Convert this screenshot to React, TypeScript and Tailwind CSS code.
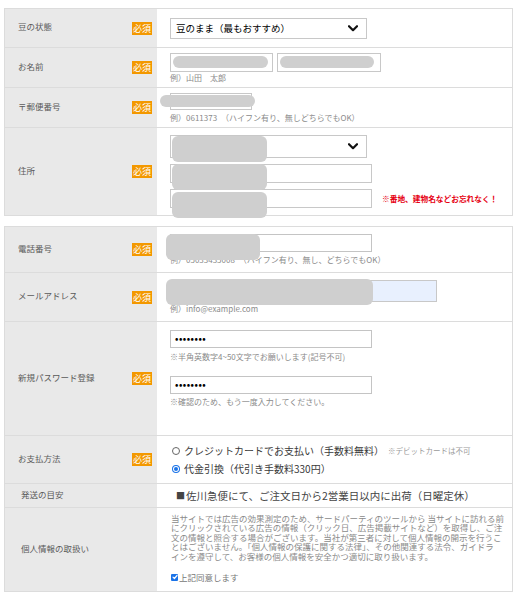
import React from "react";

const Badge = () => (
  <span className="flex h-[13px] w-[20px] items-center justify-center bg-[#f39800] text-[9px] leading-none text-white">
    必須
  </span>
);

const Chevron = () => (
  <svg width="10" height="7" viewBox="0 0 10 7" fill="none">
    <path d="M1 1.2L5 5.2L9 1.2" stroke="#111" strokeWidth="2.2" strokeLinecap="round" strokeLinejoin="round" />
  </svg>
);

// gray blurred blocks that cover personal data in the screenshot
const Mask = ({ className }: { className: string }) => (
  <div className={`absolute z-10 rounded-[6px] bg-[#cfcfcf] ${className}`} />
);

function Label({ text, required = true, pl = "pl-[13px]" }: { text: string; required?: boolean; pl?: string }) {
  return (
    <div className={`flex items-center justify-between bg-[#e9e9e9] pr-[5px] ${pl}`}>
      <span className="pb-[4px] text-[8.5px] leading-[12px] text-[#5a5a5a]">{text}</span>
      {required && <Badge />}
    </div>
  );
}

const Hint = ({ children, className = "" }: { children: React.ReactNode; className?: string }) => (
  <div className={`whitespace-nowrap text-[8px] leading-[10px] text-[#8a8a8a] ${className}`}>{children}</div>
);

const Dots = () => (
  <div className="flex h-[18px] w-[202px] items-center border border-[#c4c4c4] pl-[4px] text-[9px] font-bold tracking-[0.5px] text-black">
    ••••••••
  </div>
);

export default function App() {
  return (
    <div className="h-[596px] w-[519px] overflow-hidden bg-white pl-[4px] pt-[8px] font-['Noto_Sans_CJK_JP','Noto_Sans',sans-serif]">
      {/* 上のブロック */}
      <div className="w-[509px] border border-[#dcdcdc]">
        <div className="grid h-[38px] grid-cols-[152px_1fr]">
          <Label text="豆の状態" />
          <div className="flex items-center pl-[13px]">
            <div className="flex h-[21px] w-[197px] items-center justify-between border border-[#c8c8c8] pl-[5px] pr-[8px] text-[9.5px] text-black">
              <span>豆のまま（最もおすすめ）</span>
              <Chevron />
            </div>
          </div>
        </div>

        <div className="grid h-[40px] grid-cols-[152px_1fr] border-t border-[#dcdcdc]">
          <Label text="お名前" />
          <div className="flex flex-col justify-center pl-[13px]">
            <div className="flex gap-[4px]">
              <div className="relative h-[19px] w-[103px] border border-[#c8c8c8]">
                <Mask className="left-[2px] top-[2px] h-[12px] w-[95px]" />
              </div>
              <div className="relative h-[19px] w-[104px] border border-[#c8c8c8]">
                <Mask className="left-[2px] top-[2px] h-[12px] w-[94px]" />
              </div>
            </div>
            <Hint className="mt-[1px]">例）山田　太郎</Hint>
          </div>
        </div>

        <div className="grid h-[40px] grid-cols-[152px_1fr] border-t border-[#dcdcdc]">
          <Label text="〒郵便番号" />
          <div className="relative flex flex-col justify-center pl-[13px]">
            <div className="h-[17px] w-[82px] border border-[#c8c8c8]" />
            <Hint className="mt-[3px]">例）0611373　（ハイフン有り、無しどちらでもOK）</Hint>
            <Mask className="left-[3px] top-[7px] h-[12px] w-[95px]" />
          </div>
        </div>

        <div className="grid h-[88px] grid-cols-[152px_1fr] border-t border-[#dcdcdc]">
          <Label text="住所" />
          <div className="relative flex flex-col justify-center gap-[6px] pl-[13px]">
            <div className="flex h-[23px] w-[197px] items-center justify-end border border-[#c8c8c8] pr-[8px]">
              <Chevron />
            </div>
            <div className="h-[19px] w-[202px] border border-[#c8c8c8]" />
            <div className="flex items-center">
              <div className="h-[19px] w-[202px] border border-[#c8c8c8]" />
              <span className="ml-[10px] whitespace-nowrap text-[7.7px] font-bold text-[#e60012]">※番地、建物名などお忘れなく！</span>
            </div>
            <Mask className="left-[15px] top-[8px] h-[26px] w-[95px]" />
            <Mask className="left-[15px] top-[36px] h-[26px] w-[95px]" />
            <Mask className="left-[15px] top-[64px] h-[26px] w-[95px]" />
          </div>
        </div>
      </div>

      {/* 下のブロック */}
      <div className="mt-[10px] w-[509px] border border-[#dcdcdc]">
        <div className="grid h-[45px] grid-cols-[152px_1fr]">
          <Label text="電話番号" />
          <div className="relative flex flex-col justify-center pl-[13px]">
            <div className="h-[18px] w-[202px] border border-[#c4c4c4]" />
            <Hint className="mt-[3px]">例）05033435008　（ハイフン有り、無し、どちらでもOK）</Hint>
            <Mask className="left-[9px] top-[7px] h-[26px] w-[94px]" />
          </div>
        </div>

        <div className="grid h-[49px] grid-cols-[152px_1fr] border-t border-[#dcdcdc]">
          <Label text="メールアドレス" />
          <div className="relative flex flex-col justify-center pl-[13px]">
            <div className="h-[22px] w-[267px] border border-[#c8c8c8] bg-[#e8f0fe]" />
            <Hint className="mt-[2px] text-[8.5px]">例）info@example.com</Hint>
            <Mask className="left-[9px] top-[6px] h-[26px] w-[207px]" />
          </div>
        </div>

        <div className="grid h-[114px] grid-cols-[152px_1fr] border-t border-[#dcdcdc]">
          <Label text="新規パスワード登録" />
          <div className="flex flex-col pl-[13px] pt-[8px]">
            <Dots />
            <Hint className="mt-[4px]">※半角英数字4~50文字でお願いします(記号不可)</Hint>
            <div className="mt-[14px]">
              <Dots />
            </div>
            <Hint className="mt-[3px]">※確認のため、もう一度入力してください。</Hint>
          </div>
        </div>

        <div className="grid h-[48px] grid-cols-[152px_1fr] border-t border-[#dcdcdc]">
          <Label text="お支払方法" />
          <div className="flex flex-col justify-center gap-[4px] pl-[15px] text-[10px] leading-[14px] text-[#3a3a3a]">
            <div className="flex items-center whitespace-nowrap">
              <span className="mr-[4px] h-[8px] w-[8px] rounded-full border border-[#666] bg-white" />
              <span>クレジットカードでお支払い（手数料無料）</span>
              <span className="ml-[4px] text-[7.5px] text-[#9a9a9a]">※デビットカードは不可</span>
            </div>
            <div className="flex items-center whitespace-nowrap">
              <span className="mr-[4px] flex h-[8px] w-[8px] items-center justify-center rounded-full bg-[#1a73e8]">
                <span className="flex h-[6px] w-[6px] items-center justify-center rounded-full bg-white">
                  <span className="h-[4px] w-[4px] rounded-full bg-[#1a73e8]" />
                </span>
              </span>
              <span>代金引換（代引き手数料330円）</span>
            </div>
          </div>
        </div>

        <div className="grid h-[24px] grid-cols-[152px_1fr] border-t border-[#dcdcdc]">
          <Label text="発送の目安" required={false} pl="pl-[16px]" />
          <div className="flex items-center whitespace-nowrap pl-[19px] text-[10.5px] text-[#444]">
            <span className="mr-[1px] text-[9px]">■</span>佐川急便にて、ご注文日から2営業日以内に出荷（日曜定休）
          </div>
        </div>

        <div className="grid h-[84px] grid-cols-[152px_1fr] border-t border-[#dcdcdc]">
          <Label text="個人情報の取扱い" required={false} pl="pl-[16px]" />
          <div className="flex flex-col pl-[14px] pt-[6px]">
            <div className="whitespace-nowrap text-[8.5px] leading-[9.4px] text-[#8a8a8a]">
              <div>当サイトでは広告の効果測定のため、サードパーティのツールから 当サイトに訪れる前</div>
              <div>にクリックされている広告の情報（クリック日、広告掲載サイトなど）を取得し、ご注</div>
              <div>文の情報と照合する場合がございます。当社が第三者に対して個人情報の開示を行うこ</div>
              <div>とはございません。「個人情報の保護に関する法律」、その他関連する法令、ガイドラ</div>
              <div>インを遵守して、お客様の個人情報を安全かつ適切に取り扱います。</div>
            </div>
            <div className="mt-[11px] flex items-center text-[8.5px] leading-[10px] text-[#777]">
              <span className="mr-[1px] flex h-[7px] w-[7px] items-center justify-center rounded-[1px] bg-[#1a73e8]">
                <svg width="6" height="6" viewBox="0 0 6 6" fill="none">
                  <path d="M1 3.1L2.4 4.5L5 1.5" stroke="white" strokeWidth="1.2" strokeLinecap="round" strokeLinejoin="round" />
                </svg>
              </span>
              上記同意します
            </div>
          </div>
        </div>
      </div>
    </div>
  );
}
